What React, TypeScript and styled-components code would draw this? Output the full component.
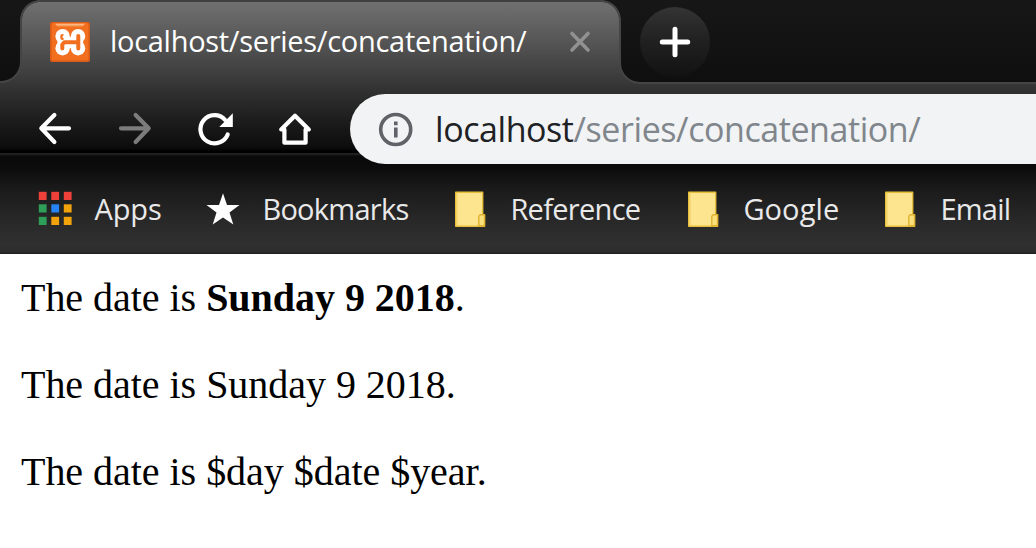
import React from "react";
import styled, { createGlobalStyle } from "styled-components";

const GlobalStyle = createGlobalStyle`
  * { box-sizing: border-box; }
  body { margin: 0; background: #fff; overflow: hidden; }
`;

const Window = styled.div`
  width: 1036px;
  height: 548px;
  overflow: hidden;
  background: #fff;
  font-family: "Open Sans", "Noto Sans", sans-serif;
`;

const Frame = styled.header`
  height: 254px;
  background: linear-gradient(
    #707070 0px, #6c6c6c 8px, #555 42px, #3e3e3e 74px, #303030 92px, #1e1e1e 118px, #0c0c0c 148px,
    #000 151px, #000 153px, #242424 153px, #1a1a1a 155px, #090909 156px,
    #0c0c0c 168px, #1b1b1b 190px, #282828 220px, #303030 244px, #2c2c2c 252px, #1c1c1c 254px
  );
`;

const TabStrip = styled.div`
  display: flex;
  height: 84px;
`;

const StripStart = styled.div`
  width: 22px;
  height: 83px;
  border: solid #454545;
  border-width: 0 2px 2px 0;
  border-bottom-right-radius: 21px;
  background: linear-gradient(#171717, #0f0f0f);
`;

const Tab = styled.div`
  position: relative;
  display: flex;
  align-items: center;
  width: 597px;
  height: 82px;
  padding-left: 28px;
  border-top: 2px solid #3f3f3f;

  &::before, &::after {
    content: "";
    position: absolute;
    top: -2px;
    width: 20px;
    height: 20px;
  }
  &::before {
    left: -2px;
    background: radial-gradient(circle at 20px 20px, transparent 17.5px, #454545 18px, #454545 19.5px, #161616 20.2px);
  }
  &::after {
    right: -2px;
    background: radial-gradient(circle at 0 20px, transparent 17.5px, #454545 18px, #454545 19.5px, #161616 20.2px);
  }
`;

const TabTitle = styled.span`
  width: 460px;
  padding: 0 0 2px 20px;
  color: #fff;
  font-size: 29px;
  line-height: 40px;
  letter-spacing: -0.29px;
  white-space: nowrap;
`;

const Spacer = styled.div`
  flex: 1;
`;

const TabEnd = styled.div`
  width: 27px;
`;

const StripEnd = styled.div`
  flex: 1;
  padding: 7px 0 0 19px;
  border: solid #454545;
  border-width: 0 0 2px 2px;
  border-bottom-left-radius: 21px;
  background: linear-gradient(#171717, #0f0f0f);
`;

const NewTab = styled.button`
  display: grid;
  place-items: center;
  width: 70px;
  height: 70px;
  padding: 0;
  border: 0;
  border-radius: 50%;
  background: linear-gradient(#343434, #202020 50%, #121212);
`;

const Toolbar = styled.div`
  display: flex;
  height: 80px;
  padding-top: 10px;
`;

const NavButtons = styled.nav`
  display: flex;
  gap: 40px;
  width: 350px;
  padding: 15px 0 0 35px;
`;

const Omnibox = styled.div`
  display: flex;
  align-items: center;
  flex: 1;
  height: 70px;
  padding-left: 26px;
  border-radius: 35px 0 0 35px;
  background: #f1f3f4;
`;

const Address = styled.span`
  padding: 0 0 1px 19px;
  color: #80868b;
  font-size: 34px;
  line-height: 48px;
  letter-spacing: -0.43px;
  white-space: nowrap;
`;

const Host = styled.span`
  color: #202124;
`;

const BookmarkBar = styled.div`
  display: flex;
  height: 90px;
  padding: 21px 0 0 35px;
`;

const Bookmark = styled.div<{ $width: number; $tracking: number }>`
  display: flex;
  align-items: center;
  flex: none;
  width: ${(p) => p.$width}px;
  height: 46px;
  gap: 19.4px;
  color: #e9e9e9;
  font-size: 29px;
  line-height: 40px;
  letter-spacing: ${(p) => p.$tracking}px;
  white-space: nowrap;

  svg { flex: none; }
`;

const BookmarkLabel = styled.span`
  padding-top: 2px;
`;

const Page = styled.main`
  padding: 20px 20px 0 21px;
  color: #000;
  font-family: "Liberation Serif", serif;
  font-size: 40px;
  line-height: 47px;
`;

const Line = styled.p`
  margin: 0 0 40px;
  letter-spacing: -0.03px;
`;

const XamppIcon = () => (
  <svg width="40" height="40" viewBox="0 0 40 40">
    <defs>
      <linearGradient id="gloss" x1="0" y1="0" x2="0" y2="1">
        <stop offset="0" stopColor="#ffc79b" />
        <stop offset="1" stopColor="#f58232" />
      </linearGradient>
    </defs>
    <rect width="40" height="40" rx="2" fill="#d95b16" />
    <rect x="1.5" y="1" width="37" height="37.5" rx="2" fill="#f26f20" />
    <path d="M5 1.800h30l-2.500 3h-25z" fill="url(#gloss)" />
    <g fill="#fff">
      <circle cx="12.600" cy="14.200" r="7.200" />
      <circle cx="28" cy="14.200" r="7.200" />
      <circle cx="12.600" cy="26.200" r="7.200" />
      <circle cx="28" cy="26.200" r="7.200" />
      <path d="M7.500 15h25.600v11H7.500z" />
    </g>
    <g fill="none" stroke="#f26f20" strokeWidth="4" strokeLinecap="round" strokeLinejoin="round">
      <path d="M12.300 14v2M12.300 26.500v-4l2-2.300h12.500M28.300 14v12.500" />
    </g>
    <circle cx="14.400" cy="14.800" r="1.900" fill="#fff" />
  </svg>
);

const CloseIcon = () => (
  <svg width="24" height="24" viewBox="0 0 24 24" fill="none" stroke="#919191" strokeWidth="3.600" strokeLinecap="round">
    <path d="M4 3.500l16 16.500M20 3.500L4 20" />
  </svg>
);

const PlusIcon = () => (
  <svg width="34" height="34" viewBox="0 0 34 34" stroke="#fff" strokeWidth="5" strokeLinecap="round">
    <path d="M17 4.300v25.400M4.300 17h25.400" />
  </svg>
);

const ArrowIcon = ({ forward = false }: { forward?: boolean }) => (
  <svg width="40" height="40" viewBox="0 0 40 40" fill="none" stroke={forward ? "#7c7c7c" : "#fff"} strokeWidth="4.200" strokeLinecap="round" strokeLinejoin="round">
    <path d={forward ? "M6 19.300h27.500M20.600 6.100L33.700 19.300 20.600 33" : "M34 19.300H6.500M19.400 6.100L6.300 19.300 19.400 33"} />
  </svg>
);

const ReloadIcon = () => (
  <svg width="40" height="40" viewBox="0 0 40 40">
    <path d="M32.700 25.400A14.100 14.100 0 1 1 30 10.800" fill="none" stroke="#fff" strokeWidth="4.200" strokeLinecap="round" />
    <path d="M37.800 4.300v13.700H24.300z" fill="#fff" />
  </svg>
);

const HomeIcon = () => (
  <svg width="40" height="40" viewBox="0 0 40 40" fill="none" stroke="#fff" strokeWidth="4.200" strokeLinecap="round" strokeLinejoin="round">
    <path d="M6.200 20.500L20 6.700l13.800 13.800h-3.200v13.200H9.400V20.500z" />
  </svg>
);

const InfoIcon = () => (
  <svg width="40" height="40" viewBox="0 0 40 40">
    <circle cx="19.700" cy="20.500" r="15" fill="none" stroke="#5f6368" strokeWidth="3.600" />
    <path d="M18 12.500h3.600v3.700H18zM18 18.600h3.600v10H18z" fill="#5f6368" />
  </svg>
);

const appColours = ["#f0403a", "#f0403a", "#f0403a", "#2e9e58", "#2684f5", "#f2a30c", "#2e9e58", "#f2a30c", "#f2a30c"];

const AppsIcon = () => (
  <svg width="40" height="40" viewBox="0 0 40 40">
    {appColours.map((c, i) => (
      <rect key={i} x={3.8 + (i % 3) * 12.5} y={3.8 + Math.floor(i / 3) * 12.5} width="7.800" height="8.200" fill={c} />
    ))}
  </svg>
);

const StarIcon = () => (
  <svg width="40" height="40" viewBox="0 0 40 40">
    <path d="M20 5.200l4 11.700 12.500.2-10 7.500 3.800 11.800L20 29.400 9.700 36.400l3.800-11.800-10-7.500 12.500-.2z" fill="#fff" />
  </svg>
);

const FolderIcon = () => (
  <svg width="36" height="40" viewBox="0 0 36 40">
    <path d="M.7 4.200h27v22.600h1.800v11.500H.7z" fill="#fde58f" stroke="#e8bf3b" strokeWidth="1.400" strokeLinejoin="round" />
    <path d="M2 5v32" stroke="#f2d264" strokeWidth="1.200" />
    <path d="M23.800 37.800v-9.500l1.500-1.500h4.200v11z" fill="#fae07c" stroke="#dfb330" strokeWidth="1.400" />
  </svg>
);

const bookmarks = [
  { label: "Apps", width: 168, tracking: -0.1, icon: <AppsIcon /> },
  { label: "Bookmarks", width: 252, tracking: -0.73, icon: <StarIcon /> },
  { label: "Reference", width: 233, tracking: -0.7, icon: <FolderIcon /> },
  { label: "Google", width: 197, tracking: 0.1, icon: <FolderIcon /> },
  { label: "Email", width: 150, tracking: -0.75, icon: <FolderIcon /> },
];

export default function App() {
  return (
    <Window>
      <GlobalStyle />
      <Frame>
        <TabStrip>
          <StripStart />
          <Tab>
            <XamppIcon />
            <TabTitle>localhost/series/concatenation/</TabTitle>
            <Spacer />
            <CloseIcon />
            <TabEnd />
          </Tab>
          <StripEnd>
            <NewTab aria-label="New tab"><PlusIcon /></NewTab>
          </StripEnd>
        </TabStrip>
        <Toolbar>
          <NavButtons>
            <ArrowIcon />
            <ArrowIcon forward />
            <ReloadIcon />
            <HomeIcon />
          </NavButtons>
          <Omnibox>
            <InfoIcon />
            <Address><Host>localhost</Host>/series/concatenation/</Address>
          </Omnibox>
        </Toolbar>
        <BookmarkBar>
          {bookmarks.map((b) => (
            <Bookmark key={b.label} $width={b.width} $tracking={b.tracking}>
              {b.icon}
              <BookmarkLabel>{b.label}</BookmarkLabel>
            </Bookmark>
          ))}
        </BookmarkBar>
      </Frame>
      <Page>
        <Line>The date is <strong>Sunday 9 2018</strong>.</Line>
        <Line>The date is Sunday 9 2018.</Line>
        <Line>The date is $day $date $year.</Line>
      </Page>
    </Window>
  );
}
